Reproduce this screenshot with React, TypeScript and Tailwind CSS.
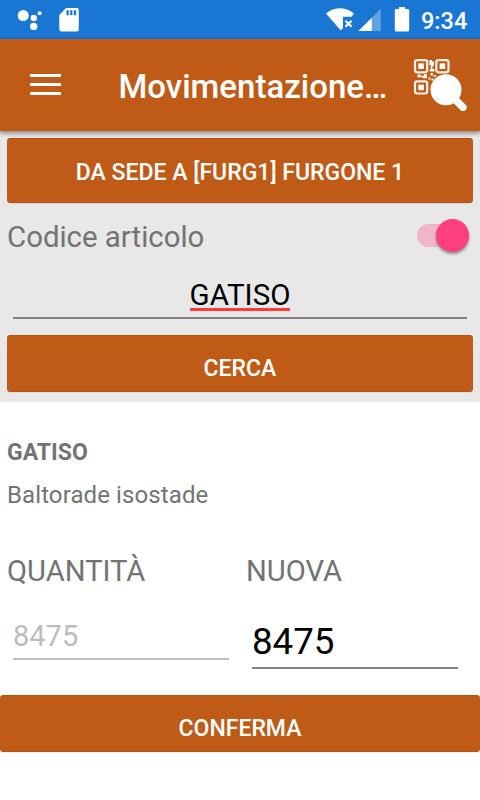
import React from "react";

function StatusBar() {
  return (
    <div className="flex h-[39px] items-start justify-between bg-[#1976d2] text-white">
      <svg width="90" height="39" viewBox="0 0 90 39" fill="currentColor">
        <circle cx="23.2" cy="15.5" r="5.5" />
        <circle cx="33.8" cy="18" r="3.2" />
        <circle cx="39.6" cy="13.2" r="2" />
        <circle cx="33.7" cy="26.4" r="3.7" />
        <path
          fillRule="evenodd"
          d="M66 8h10.800q2 0 2 2v19.500q0 2-2 2H61.300q-2 0-2-2V15ZM66.500 10.300v4.900h2.300v-4.900Zm3.700 0v4.900h2.200v-4.900Zm3.600 0v4.900h2.300v-4.900Z"
        />
      </svg>
      <div className="flex pr-[13px]">
        <svg width="86" height="39" viewBox="326 0 86 39" fill="currentColor">
          <path d="M326 13.400Q339.800 3.200 354 13.400L351.500 16.800H343V28.200L340.600 30.300Z" />
          <path d="m345.500 20.800 6 6m0-6-6 6" stroke="currentColor" strokeWidth="2.100" />
          <path d="M380.800 8.800V31H358.400Z" opacity=".32" />
          <path d="M371.800 17.700V31H358.400Z" />
          <path d="M399 7h6v2h3q1.200 0 1.200 1.200v20q0 1.300-1.200 1.300h-12q-1.200 0-1.200-1.300v-20Q394.800 9 396 9h3Z" />
        </svg>
        <span className="ml-[9px] w-[46px] pt-[1px] text-[23.5px] leading-[40px] font-medium whitespace-nowrap">9:34</span>
      </div>
    </div>
  );
}

function QrSearchIcon() {
  return (
    <svg width="56" height="54" viewBox="412 57 56 54" fill="none" stroke="#fff">
      <g strokeWidth="2.200" stroke="#fdf1e8">
        <rect x="415" y="60.100" width="12.200" height="12.200" rx="2.200" />
        <rect x="436.300" y="60.100" width="12.200" height="12.200" rx="2.200" />
        <rect x="415" y="81.300" width="12.200" height="12.200" rx="2.200" />
      </g>
      <g fill="#fff" stroke="none">
        <rect x="418.300" y="63.400" width="5.600" height="5.600" />
        <rect x="439.600" y="63.400" width="5.600" height="5.600" />
        <rect x="418.300" y="84.600" width="5.600" height="5.600" />
        <path d="M429.300 60h2.500v1.500h2.200V66h-1.500v3h1.800v2.500h-4.500V69h1v-4h-1.500ZM417.500 74.500h3v1.300h3.500v-1.500h3v4h-4v-1h-5.500ZM430.500 73h2.500v2.500h-2.500ZM428.500 77.500h2v2h-2ZM433.800 75h2v2h-2ZM431.500 78.500h2v2h-2Z" />
        <circle cx="446" cy="89.800" r="15.500" />
      </g>
      <path d="m454 98.300 9 9" strokeWidth="7.400" strokeLinecap="round" />
      <path d="M450.500 79.500q5.500 2.500 6 8.500" stroke="#f9eee6" strokeWidth=".8" />
    </svg>
  );
}

function AppBar() {
  return (
    <header className="relative z-10 flex h-[92px] bg-[#bf5b17] text-white shadow-[0_2px_5px_rgba(0,0,0,0.45)]">
      <div className="flex w-[118.500px] flex-col gap-[6px] pt-[35px] pl-[30px]">
        <div className="h-[3px] w-[31px] bg-white" />
        <div className="h-[3px] w-[31px] bg-white" />
        <div className="h-[3px] w-[31px] bg-white" />
      </div>
      <h1 className="w-[293.500px] pt-[28px] text-[33px] leading-[40px] font-medium whitespace-nowrap">Movimentazione…</h1>
      <div className="pt-[18px]">
        <QrSearchIcon />
      </div>
    </header>
  );
}

function Button({ className, children }: { className: string; children: React.ReactNode }) {
  return (
    <button
      className={`block w-full rounded-[4px] bg-[#bf5b17] text-center text-[23px] font-medium whitespace-nowrap text-white shadow-[inset_0_1px_0_#b9520f,inset_0_-1px_0_#b9520f,0_1px_0_rgba(0,0,0,0.06)] ${className}`}
    >
      {children}
    </button>
  );
}

export default function App() {
  return (
    <div className="h-[800px] w-[480px] overflow-hidden bg-white font-[Roboto,sans-serif] text-[#737373]">
      <StatusBar />
      <AppBar />
      <section className="h-[271px] bg-[#e8e8e8] px-[7px] pt-[7px]">
        <Button className="h-[65px] pt-[5px]">DA SEDE A [FURG1] FURGONE 1</Button>
        <div className="mt-px flex h-[65px] items-center justify-between pr-[5px]">
          <span className="text-[29.4px] leading-[40px]">Codice articolo</span>
          <div className="-mr-px mb-[2px] flex h-[23px] w-[52px] items-center justify-end rounded-full bg-[#f1b5ca]">
            <div className="h-[33px] w-[33px] shrink-0 rounded-full bg-[#fb3f7f] shadow-[0_2px_3px_rgba(0,0,0,0.4)]" />
          </div>
        </div>
        <div className="mx-[6px] h-[50px] border-b-2 border-[#828282] pt-[6px] text-center text-[29.5px] leading-[40px] text-black">
          <span className="inline-block h-[36px] border-b-[3px] border-[#ff3838] leading-[41px]">GATISO</span>
        </div>
        <Button className="mt-[16px] h-[57px] pt-[11px]">CERCA</Button>
      </section>
      <section className="h-[293px] pt-[31px]">
        <h2 className="pl-[7px] text-[23px] leading-[40px] font-bold">GATISO</h2>
        <p className="mt-[2px] pl-[7px] text-[24px] leading-[40px] tracking-[0.1px]">Baltorade isostade</p>
        <div className="mt-[36px] flex">
          <div className="w-[239px] pl-[7px]">
            <div className="text-[29.2px] leading-[40px]">QUANTITÀ</div>
            <div className="mt-[25px] ml-[6px] h-[44px] w-[216px] border-b-2 border-[#bfbfbf] text-[29px] leading-[40px] text-[#bcbcbc]">8475</div>
          </div>
          <div className="pl-[7px]">
            <div className="text-[29.2px] leading-[40px]">NUOVA</div>
            <div className="mt-[31px] ml-[6px] h-[47px] w-[206px] border-b-2 border-[#858585] text-[36.7px] leading-[40px] text-black">8475</div>
          </div>
        </div>
      </section>
      <Button className="h-[57px] pt-[11px]">CONFERMA</Button>
    </div>
  );
}
